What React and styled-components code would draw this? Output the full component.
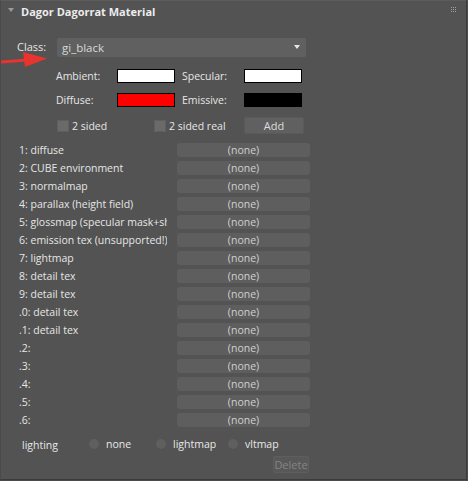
import React from "react";
import styled, { createGlobalStyle } from "styled-components";

const GlobalStyle = createGlobalStyle`
	html, body {
		margin: 0;
		padding: 0;
		background: #4b4b4b;
	}
	body {
		font-family: "Open Sans", "DejaVu Sans", sans-serif;
		font-size: 10.5px;
		color: #dedede;
	}
`;

// --- Styled Components ---
const Panel = styled.div`
	position: relative;
	width: 465px;
	height: 478px;
	background: #535353;
	border-right: 1px solid #3c3c3c;
	border-bottom: 1px solid #3c3c3c;
	border-top: 1px solid #5c5c5c;
	border-left: 1px solid #4a4a4a;
	overflow: hidden;
`;

const Header = styled.div`
	display: flex;
	align-items: center;
	height: 21px;
	padding: 0 8px 0 7px;
	gap: 7px;
`;

const Caret = styled.div`
	width: 0;
	height: 0;
	border-left: 3px solid transparent;
	border-right: 3px solid transparent;
	border-top: 4px solid #9a9a9a;
	margin-top: -3px;
`;

const Title = styled.div`
	flex: 1;
	font-weight: 700;
	font-size: 11px;
	color: #ececec;
	margin-top: -1px;
`;

const Grip = styled.div`
	display: grid;
	grid-template-columns: repeat(3, 1px);
	gap: 1px;
	margin-top: -4px;
	margin-right: 2px;
	span {
		width: 1px;
		height: 1px;
		background: #a0a0a0;
	}
`;

const ClassRow = styled.div`
	display: flex;
	align-items: center;
	padding: 15px 0 0 16px;
	height: 20px;
`;

const ClassLabel = styled.div`
	width: 40px;
	color: #e6e6e6;
	font-size: 11px;
	margin-top: -1px;
`;

const Dropdown = styled.div`
	width: 249px;
	height: 19px;
	background: #606060;
	border-radius: 2px;
	display: flex;
	align-items: center;
	justify-content: space-between;
	padding: 0 6px 0 5px;
	box-sizing: border-box;
	color: #d8d8d8;
	font-size: 11.5px;
`;

const DropCaret = styled.div`
	width: 0;
	height: 0;
	border-left: 3px solid transparent;
	border-right: 3px solid transparent;
	border-top: 4px solid #e6e6e6;
`;

const ColorGrid = styled.div`
	display: grid;
	grid-template-columns: 61px 65px 62px 58px;
	grid-auto-rows: 14px;
	row-gap: 10px;
	align-items: center;
	padding: 12px 0 0 55px;
	color: #e6e6e6;
`;

const Swatch = styled.div`
	width: 56px;
	height: 12px;
	background: ${({ $color }) => $color};
	border: 1px solid #000;
`;

const OptionsRow = styled.div`
	display: grid;
	grid-template-columns: 97px 90px 58px;
	align-items: center;
	padding: 10px 0 0 56px;
	height: 17px;
`;

const CheckLabel = styled.label`
	display: flex;
	align-items: center;
	gap: 3px;
	color: #e6e6e6;
`;

const Box = styled.span`
	width: 10px;
	height: 10px;
	background: #6a6a6a;
	border: 1px solid #5f5f5f;
`;

const SmallButton = styled.div`
	height: 15px;
	border-radius: 2px;
	background: ${({ $disabled }) => ($disabled ? "#585858" : "#606060")};
	border: 1px solid ${({ $disabled }) => ($disabled ? "#5e5e5e" : "#5a5a5a")};
	color: ${({ $disabled }) => ($disabled ? "#858585" : "#dcdcdc")};
	display: flex;
	align-items: center;
	justify-content: center;
	font-size: 11px;
	width: ${({ $w }) => $w}px;
`;

const MapList = styled.div`
	display: flex;
	flex-direction: column;
	gap: 4px;
	padding: 9px 0 0 18px;
`;

const MapRow = styled.div`
	display: flex;
	align-items: center;
	height: 14px;
`;

const MapLabel = styled.div`
	width: 148px;
	margin-right: 10px;
	overflow: hidden;
	white-space: nowrap;
	color: #e6e6e6;
`;

const MapButton = styled.div`
	width: 133px;
	height: 14px;
	border-radius: 3px;
	background: #5e5e5e;
	display: flex;
	align-items: center;
	justify-content: center;
	color: #d0d0d0;
`;

const LightingRow = styled.div`
	display: flex;
	align-items: center;
	padding: 10px 0 0 21px;
	height: 14px;
`;

const LightingLabel = styled.div`
	width: 67px;
	color: #e6e6e6;
	margin-top: 2px;
`;

const Radio = styled.label`
	display: flex;
	align-items: center;
	gap: 7px;
	width: ${({ $w }) => $w}px;
	color: #e8e8e8;
	&::before {
		content: "";
		width: 10px;
		height: 10px;
		border-radius: 50%;
		background: #5f5f5f;
	}
`;

const Footer = styled.div`
	display: flex;
	justify-content: flex-start;
	padding: 5px 0 0 272px;
`;

const Pointer = styled.svg`
	position: absolute;
	left: 0;
	top: 48px;
`;

const maps = [
	"1: diffuse",
	"2: CUBE environment",
	"3: normalmap",
	"4: parallax (height field)",
	"5: glossmap (specular mask+shininess)",
	"6: emission tex (unsupported!)",
	"7: lightmap",
	"8: detail tex",
	"9: detail tex",
	".0: detail tex",
	".1: detail tex",
	".2:",
	".3:",
	".4:",
	".5:",
	".6:",
];

const App = () => {
	return (
		<>
			<GlobalStyle />
			<Panel>
				<Header>
					<Caret />
					<Title>Dagor Dagorrat Material</Title>
					<Grip>
						{Array.from({ length: 9 }).map((_, i) => (
							<span key={i} />
						))}
					</Grip>
				</Header>

				<ClassRow>
					<ClassLabel>Class:</ClassLabel>
					<Dropdown>
						<span>gi_black</span>
						<DropCaret />
					</Dropdown>
				</ClassRow>

				<ColorGrid>
					<span>Ambient:</span>
					<Swatch $color="#ffffff" />
					<span>Specular:</span>
					<Swatch $color="#ffffff" />
					<span>Diffuse:</span>
					<Swatch $color="#ff0000" />
					<span>Emissive:</span>
					<Swatch $color="#000000" />
				</ColorGrid>

				<OptionsRow>
					<CheckLabel>
						<Box />2 sided
					</CheckLabel>
					<CheckLabel>
						<Box />2 sided real
					</CheckLabel>
					<SmallButton $w={58}>Add</SmallButton>
				</OptionsRow>

				<MapList>
					{maps.map((m) => (
						<MapRow key={m}>
							<MapLabel>{m}</MapLabel>
							<MapButton>(none)</MapButton>
						</MapRow>
					))}
				</MapList>

				<LightingRow>
					<LightingLabel>lighting</LightingLabel>
					<Radio $w={67}>none</Radio>
					<Radio $w={72}>lightmap</Radio>
					<Radio $w={60}>vltmap</Radio>
				</LightingRow>

				<Footer>
					<SmallButton $w={34} $disabled>
						Delete
					</SmallButton>
				</Footer>

				<Pointer width="48" height="20" viewBox="0 0 48 20">
					<path d="M0 11.5 L26 9.5 L27 12.5 L0 14.5 Z" fill="#e8332e" />
					<path d="M22 3 L46 9.5 L24 18 Z" fill="#e8332e" />
				</Pointer>
			</Panel>
		</>
	);
};

export default App;
